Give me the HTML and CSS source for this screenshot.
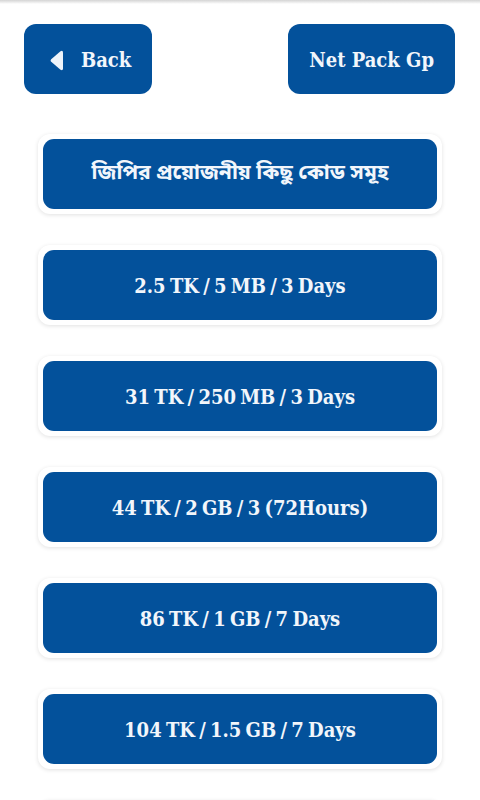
FILE: index.html
```html
<!DOCTYPE html>
<html lang="en">
<head>
    <meta charset="UTF-8">
    <meta name="viewport" content="width=device-width, initial-scale=1">
    <title>Net Pack Gp</title>
    <link rel="stylesheet" href="styles.css">
</head>
<body>

    <div class="topbar"></div>

    <div class="header">
        <button class="head-btn back-btn">
            <svg class="back-icon" width="13" height="21" viewBox="0 0 13 21">
                <path d="M10.5 1.2 Q13 -0.2 13 2.8 L13 18.2 Q13 21.2 10.5 19.8 L1.2 11.8 Q0 10.5 1.2 9.2 Z" fill="#eef4fb"/>
            </svg>
            <span>Back</span>
        </button>
        <button class="head-btn">Net Pack Gp</button>
    </div>

    <div class="list">
        <div class="card"><button class="pack bn">জিপির প্রয়োজনীয় কিছু কোড সমূহ</button></div>
        <div class="card"><button class="pack">2.5 TK / 5 MB / 3 Days</button></div>
        <div class="card"><button class="pack">31 TK / 250 MB / 3 Days</button></div>
        <div class="card"><button class="pack">44 TK / 2 GB / 3 (72Hours)</button></div>
        <div class="card"><button class="pack">86 TK / 1 GB / 7 Days</button></div>
        <div class="card"><button class="pack">104 TK / 1.5 GB / 7 Days</button></div>
        <!-- next card only peeks in at the bottom edge -->
        <div class="card"><div class="pack"></div></div>
    </div>

</body>
</html>
```

FILE: styles.css
```css
body {
    margin: 0;
    background-color: #ffffff;
    font-family: "DejaVu Serif Condensed", "DejaVu Serif", serif;
    overflow: hidden;
}
.topbar {
    height: 4px;
    background: linear-gradient(#d4d4d4, #ffffff);
}
.header {
    display: flex;
    justify-content: space-between;
    padding: 20px 25px 0 24px;
}
button {
    border: none;
    cursor: pointer;
    color: #f2f6fb;
    font-family: inherit;
    font-weight: bold;
}
.head-btn {
    height: 70px;
    padding: 2px 21px 0 21px;
    background-color: #03519b;
    border-radius: 12px;
    font-size: 20px;
    display: flex;
    align-items: center;
}
.back-btn {
    width: 128px;
    padding-left: 26px;
    gap: 18px;
}
.back-icon {
    flex-shrink: 0;
}
.list {
    display: flex;
    flex-direction: column;
    gap: 31px;
    padding: 40px 38px 0 38px;
}
.card {
    padding: 5px;
    border-radius: 12px;
    background-color: #ffffff;
    box-shadow: 0 1px 4px rgba(0, 0, 0, 0.12);
}
.pack {
    display: block;
    width: 100%;
    height: 70px;
    padding-top: 3px;
    background-color: #03519b;
    border-radius: 11px;
    font-size: 20px;
    word-spacing: -2px; /* tighter gaps round the slashes */
    text-align: center;
}
.pack.bn {
    font-family: "Noto Sans Bengali", "Noto Sans", sans-serif;
    font-size: 21px;
    word-spacing: normal;
    padding-top: 0;
}
```
